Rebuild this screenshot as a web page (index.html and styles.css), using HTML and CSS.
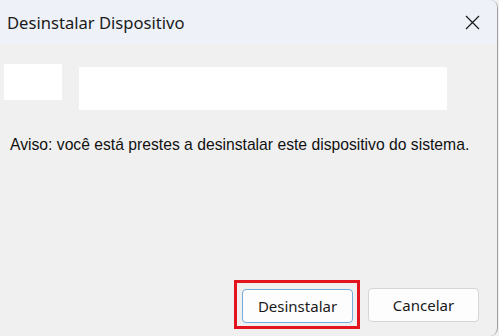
FILE: index.html
```html
<!DOCTYPE html>
<html lang="pt-BR">
<head>
  <meta charset="UTF-8" />
  <title>Desinstalar Dispositivo</title>
  <link rel="stylesheet" href="styles.css">
</head>
<body>
  <div class="window">
    <!-- Barra de título -->
    <div class="title-bar">
      <span class="title">Desinstalar Dispositivo</span>
      <svg class="close-icon" width="15" height="15" viewBox="0 0 15 15">
        <path d="M1 1 L14 14 M14 1 L1 14" stroke="#1a1a1a" stroke-width="1.2" fill="none" />
      </svg>
    </div>
    <!-- Conteúdo -->
    <div class="content">
      <div class="device-row">
        <div class="device-icon"></div>
        <div class="device-name"></div>
      </div>
      <p class="warning">Aviso: você está prestes a desinstalar este dispositivo do sistema.</p>
    </div>
    <!-- Botões -->
    <div class="footer">
      <div class="highlight">
        <button class="btn btn-primary">Desinstalar</button>
      </div>
      <button class="btn">Cancelar</button>
    </div>
  </div>
</body>
</html>
```

FILE: styles.css
```css
* { margin: 0; padding: 0; box-sizing: border-box; }
body {
  background: #f0f0f0;
  font-family: 'Noto Sans', 'Open Sans', sans-serif;
  color: #1a1a1a;
}
.window {
  width: 498px;
  height: 336px;
  background: #f0f0f0;
  border-right: 1px solid #a0a0a0;
  border-radius: 0 8px 8px 0;
  display: flex;
  flex-direction: column;
  overflow: hidden;
}
.title-bar {
  height: 44px;
  background: #eef2f8;
  display: flex;
  align-items: center;
  justify-content: space-between;
  padding: 0 17px 0 7px;
}
.title { font-size: 16.6px; }
.close-icon { margin-top: 1px; }
.content { flex: 1; }
.device-row {
  display: flex;
  align-items: flex-start;
  padding: 20px 0 0 4px;
  gap: 17px;
}
.device-icon {
  width: 58px;
  height: 36px;
  background: #fff;
}
.device-name {
  width: 368px;
  height: 43px;
  margin-top: 3px;
  background: #fff;
}
.warning {
  font-family: 'Liberation Sans', Arial, sans-serif;
  font-size: 15.7px;
  padding: 26px 0 0 10px;
  color: #111;
}
.footer {
  display: flex;
  justify-content: flex-end;
  align-items: center;
  gap: 8px;
  padding: 0 18px 7px 0;
}
.highlight {
  border: 3px solid #e3141e;
  padding: 6px 4px 3px 5px;
}
.btn {
  width: 111px;
  height: 34px;
  background: #fdfdfd;
  border: 1px solid #d6d6d6;
  border-radius: 4px;
  font-family: 'Noto Sans', 'Open Sans', sans-serif;
  font-size: 15px;
  color: #1a1a1a;
}
.btn-primary { border-color: #74acde; }
```
